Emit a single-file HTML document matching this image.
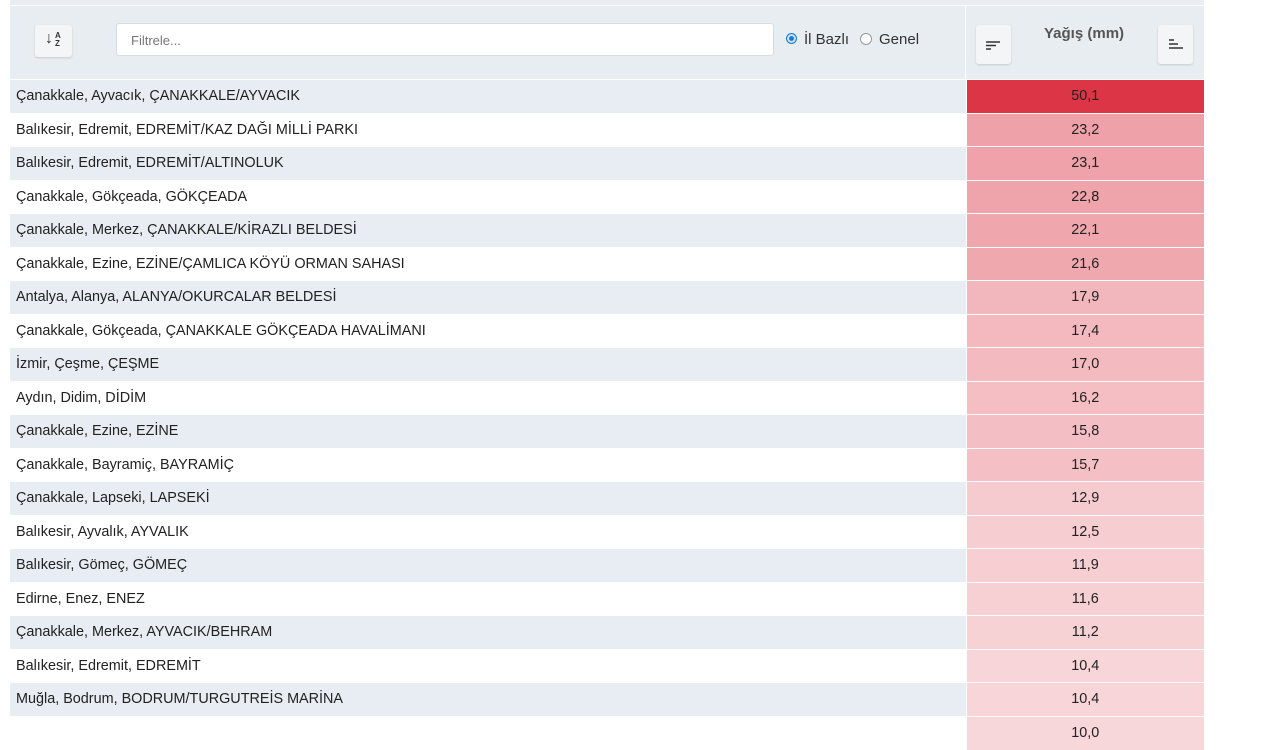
<!DOCTYPE html><html><head><meta charset="utf-8"><style>
body{margin:0;width:1280px;height:720px;overflow:hidden;background:#fff;font-family:"Liberation Sans",sans-serif;}
.top{position:absolute;left:10px;top:0;width:1194px;height:5px;background:#e9edf1;}
.hdr{position:absolute;left:10px;top:6px;width:1194px;height:73px;background:#e8edf2;}
.btn{position:absolute;background:#f3f5f7;border-radius:3px;box-shadow:0 1px 2px rgba(0,0,0,.15);}
.inp{position:absolute;left:106px;top:17px;width:658px;height:33px;background:#fff;border:1px solid #d7dce1;border-radius:3px;font-size:13px;color:#777;line-height:33px;padding-left:14px;box-sizing:border-box;}
.vsep{position:absolute;left:955px;top:0;width:1px;height:73px;background:#fff;}
table{position:absolute;left:10px;top:79px;border-collapse:collapse;width:1194px;}
td{height:33.5px;padding:0;font-size:14.4px;color:#222;}
td.n{padding-left:6px;}
td.v{width:238px;text-align:center;border-top:1px solid #fff;border-left:1px solid #fff;box-sizing:border-box;}
tr:nth-child(odd) td.n{background:#e7edf2;}
</style></head><body>
<div class="top"></div>
<div class="hdr">
 <div class="btn" style="left:25px;top:19px;width:37px;height:32px;"><span style="position:absolute;left:10px;top:5px;font-size:16px;font-weight:bold;color:#333">↓</span><span style="position:absolute;left:20px;top:7px;font-size:8px;line-height:8px;font-weight:bold;color:#333">A<br>Z</span></div>
 <div class="inp">Filtrele...</div>
 <div style="position:absolute;left:776px;top:27px;width:11px;height:11px;border-radius:50%;background:#1a7fd4;box-shadow:inset 0 0 0 2px #cfe3f5;border:1px solid #1a7fd4;box-sizing:border-box"></div>
 <span style="position:absolute;left:794px;top:25px;font-size:15px;color:#333">İl Bazlı</span>
 <div style="position:absolute;left:850px;top:27px;width:12px;height:12px;border-radius:50%;background:#fff;border:1px solid #999;box-sizing:border-box"></div>
 <span style="position:absolute;left:869px;top:25px;font-size:15px;color:#333">Genel</span>
 <div class="vsep"></div>
 <div class="btn" style="left:966px;top:19px;width:35px;height:39px;"><svg width="35" height="39"><path d="M10 17h14M10 20.5h10M10 24h5" stroke="#333" stroke-width="1.6"/></svg></div>
 <span style="position:absolute;left:1034px;top:19px;font-size:15px;font-weight:bold;color:#555">Yağış (mm)</span>
 <div class="btn" style="left:1148px;top:19px;width:35px;height:39px;"><svg width="35" height="39"><path d="M11 15h5M11 19h9M11 23h14" stroke="#333" stroke-width="1.6"/></svg></div>
</div>
<table id="t"></table>
<script>
var d=[["Çanakkale, Ayvacık, ÇANAKKALE/AYVACIK","50,1"],["Balıkesir, Edremit, EDREMİT/KAZ DAĞI MİLLİ PARKI","23,2"],["Balıkesir, Edremit, EDREMİT/ALTINOLUK","23,1"],["Çanakkale, Gökçeada, GÖKÇEADA","22,8"],["Çanakkale, Merkez, ÇANAKKALE/KİRAZLI BELDESİ","22,1"],["Çanakkale, Ezine, EZİNE/ÇAMLICA KÖYÜ ORMAN SAHASI","21,6"],["Antalya, Alanya, ALANYA/OKURCALAR BELDESİ","17,9"],["Çanakkale, Gökçeada, ÇANAKKALE GÖKÇEADA HAVALİMANI","17,4"],["İzmir, Çeşme, ÇEŞME","17,0"],["Aydın, Didim, DİDİM","16,2"],["Çanakkale, Ezine, EZİNE","15,8"],["Çanakkale, Bayramiç, BAYRAMİÇ","15,7"],["Çanakkale, Lapseki, LAPSEKİ","12,9"],["Balıkesir, Ayvalık, AYVALIK","12,5"],["Balıkesir, Gömeç, GÖMEÇ","11,9"],["Edirne, Enez, ENEZ","11,6"],["Çanakkale, Merkez, AYVACIK/BEHRAM","11,2"],["Balıkesir, Edremit, EDREMİT","10,4"],["Muğla, Bodrum, BODRUM/TURGUTREİS MARİNA","10,4"],["","10,0"]];
var h="";d.forEach(function(r){var v=parseFloat(r[1].replace(',','.'));var a=v>=50?1:v/50.1;var c="rgb("+Math.round(255-35*a)+","+Math.round(255-202*a)+","+Math.round(255-186*a)+")";h+='<tr><td class="n">'+r[0]+'</td><td class="v" style="background:'+c+'">'+r[1]+'</td></tr>';});
document.getElementById("t").innerHTML=h;
</script>
</body></html>
